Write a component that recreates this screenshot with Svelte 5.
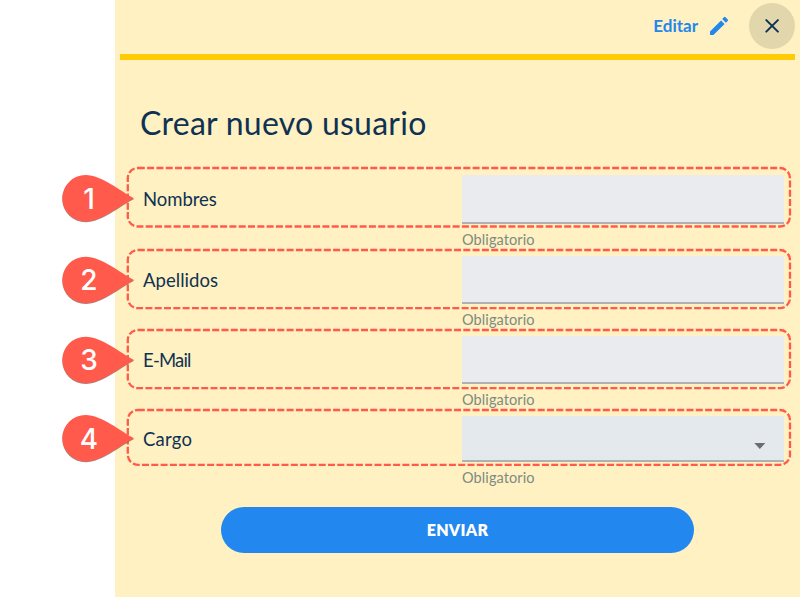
<script>
  const fields = [
    { name: 'Nombres', height: 82, inset: 7, input: 48.5, box: 58.5, spacing: -0.03, pin: 30.3, hint: 6.5, lift: 1.5 },
    { name: 'Apellidos', height: 80, inset: 5.5, input: 48.5, box: 58.2, spacing: 0.05, pin: 30, hint: 5.5, lift: 0 },
    { name: 'E-Mail', height: 80, inset: 5.5, input: 48.5, box: 58.2, spacing: -0.8, pin: 30, hint: 5.5, lift: 0 },
    { name: 'Cargo', height: 97, inset: 6, input: 46, box: 54.8, spacing: 0.25, pin: 28.2, hint: 6, lift: 0, select: true }
  ];
</script>

<main class="panel">
  <header>
    <button class="edit">
      <span>Editar</span>
      <svg width="24" height="24" viewBox="0 0 24 24"><path d="M3 17.6V20.4q0 .6.6.6H6.4L17.6 9.94l-3.55-3.55L3 17.6zM20.7 7.04a1.1 1.1 0 0 0 0-1.6l-2.14-2.15a1.1 1.1 0 0 0-1.6 0l-1.75 1.83 3.65 3.65 1.84-1.73z" /></svg>
    </button>
    <button class="close" aria-label="Cerrar">
      <svg width="14" height="14" viewBox="0 0 14 14"><path d="M1.3 1.1 12.9 12.6M12.9 1.1 1.3 12.6" /></svg>
    </button>
  </header>

  <h1>Crear nuevo usuario</h1>

  <form onsubmit={(e) => e.preventDefault()}>
    {#each fields as field, i}
      <div class="field" style="height: {field.height}px; padding-top: {field.inset}px">
        <div class="row" style="height: {field.input}px">
          <label for="f{i}" style="letter-spacing: {field.spacing}px; padding-bottom: {field.lift}px">{field.name}</label>
          {#if field.select}
            <button type="button" class="control select" id="f{i}" aria-label={field.name}>
              <svg width="12" height="6" viewBox="0 0 12 6"><path d="M.3 0h11L5.8 6z" /></svg>
            </button>
          {:else}
            <input class="control" id="f{i}" />
          {/if}
        </div>
        <div class="hint" style="margin-top: {field.hint}px">Obligatorio</div>

        <svg class="callout" width="740" height="70" viewBox="0 0 740 70">
          <rect x="67.8" y="3" width="662.2" height={field.box} rx="10" />
          <g transform="translate(0 {field.pin + 3})">
            <path class="shade" d="M74 0C60 7 42 23.2 25.5 23.2A23.2 23.2 0 0 1 25.5-23.2C42-23.2 60-7 74 0Z" />
            <path class="pin" d="M74 0C60 7 42 23.2 25.5 23.2A23.2 23.2 0 0 1 25.5-23.2C42-23.2 60-7 74 0Z" />
            <text x="29" y="10.4">{i + 1}</text>
          </g>
        </svg>
      </div>
    {/each}
    <button class="submit">ENVIAR</button>
  </form>
</main>

<style>
  :global(body) { background: #fff; }
  .panel {
    box-sizing: border-box;
    height: 597px;
    margin-left: 115px;
    padding: 0 5px;
    background: #fff1c1;
    color: #0f3153;
    font-family: Lato, sans-serif;
  }
  button {
    border: 0;
    padding: 0;
    font-family: inherit;
    background: none;
  }
  header {
    box-sizing: border-box;
    height: 60px;
    display: flex;
    justify-content: flex-end;
    align-items: flex-start;
    border-bottom: 6px solid #ffcb05;
  }
  .edit {
    display: flex;
    align-items: center;
    height: 52px;
    gap: 9px;
    margin-right: 18px;
    color: #2287ee;
    font-size: 17px;
    font-weight: 700;
    line-height: 24px;
  }
  .edit svg { fill: #2287ee; }
  .close {
    display: flex;
    align-items: center;
    justify-content: center;
    width: 46px;
    height: 46px;
    margin-top: 3px;
    border-radius: 50%;
    background: #e2d6ac;
  }
  .close path {
    stroke: #0f3153;
    stroke-width: 2;
    stroke-linecap: round;
  }
  h1 {
    margin: 41px 0 0 20px;
    height: 67px;
    font-size: 32px;
    line-height: 44px;
    font-weight: 400;
    letter-spacing: 0.25px;
  }
  form { display: flex; flex-direction: column; }
  .field {
    position: relative;
    box-sizing: border-box;
    padding-left: 23px;
  }
  .row { display: flex; align-items: center; }
  label { width: 319px; font-size: 18.5px; line-height: 24px; }
  .control {
    box-sizing: border-box;
    width: 322px;
    height: 100%;
    border: 0;
    border-bottom: 2px solid #aeb0b1;
    border-radius: 0;
    padding: 0 10px;
    background: #e9ebef;
    outline: none;
  }
  .select {
    display: flex;
    justify-content: flex-end;
    padding: 16px 18px 0 0;
    align-items: center;
    background: #e3e9ec;
  }
  .select path { fill: #6b6d70; }
  .hint {
    margin-left: 319px;
    color: #7e8a83;
    font-size: 14.5px;
    line-height: 20px;
    letter-spacing: 0.1px;
  }
  .callout {
    position: absolute;
    left: -60px;
    top: -3px;
    pointer-events: none;
    overflow: visible;
  }
  rect {
    fill: none;
    stroke: #ff5a4c;
    stroke-width: 2.3;
    stroke-dasharray: 7 2.3;
  }
  .pin { fill: #ff5a4c; }
  .shade {
    fill: #805d56;
    transform: translateY(0.8px);
    opacity: 0.75;
  }
  .callout text {
    fill: #fff;
    font: 500 28px Inter, sans-serif;
    text-anchor: middle;
  }
  .submit {
    width: 473px;
    height: 46px;
    margin-left: 101px;
    padding-bottom: 2px;
    border-radius: 23px;
    background: #2287ee;
    color: #fff;
    font-size: 16px;
    font-weight: 800;
    letter-spacing: 0.3px;
  }
</style>
